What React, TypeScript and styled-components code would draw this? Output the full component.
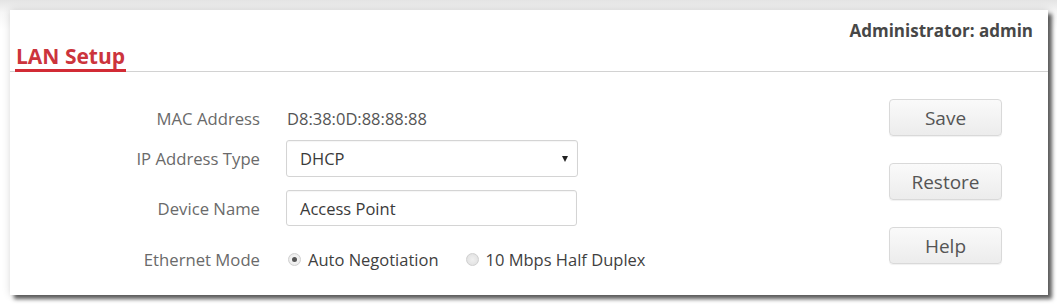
import styled, { createGlobalStyle } from "styled-components";

const GlobalStyle = createGlobalStyle`
    html, body {
        margin: 0;
        padding: 0;
        background: #ffffff;
    }
    body {
        font-family: "Open Sans", "Noto Sans", Arial, sans-serif;
        width: 1057px;
        height: 304px;
        overflow: hidden;
    }
`;

const Page = styled.div`
    padding: 10px 9px 9px 10px;
    background: linear-gradient(#e4e4e4, #f6f6f6 12px, #ffffff 30px);
`;

const Panel = styled.div`
    width: 1038px;
    height: 285px;
    background: #ffffff;
    box-shadow: 0 0 8px rgba(0, 0, 0, 0.14), 4px 4px 4px rgba(0, 0, 0, 0.62);
    display: flex;
    flex-direction: column;
`;

const Header = styled.div`
    height: 61px;
    border-bottom: 1px solid #d2d2d2;
    display: flex;
    justify-content: space-between;
    padding: 0 15px 0 5px;
`;

const Title = styled.h1`
    align-self: flex-end;
    margin: 0 0 -1px 0;
    font-size: 21px;
    font-weight: 700;
    color: #cc343c;
    line-height: 24px;
    padding: 0 1px 1px 1px;
    border-bottom: 3px solid #d22b35;
`;

const Admin = styled.div`
    margin-top: 9px;
    font-size: 17px;
    font-weight: 700;
    color: #474747;
`;

const Body = styled.div`
    flex: 1;
    display: flex;
    justify-content: space-between;
    padding: 0 46px 0 0;
`;

const Form = styled.div`
    display: grid;
    grid-template-columns: 250px auto;
    grid-template-rows: 18px 37px 36px 40px;
    column-gap: 26px;
    row-gap: 13px;
    padding-top: 37px;
    align-content: start;
`;

const Label = styled.div`
    display: flex;
    align-items: center;
    justify-content: flex-end;
    font-size: 16.7px;
    color: #6a6a6a;
    white-space: nowrap;
`;

const Field = styled.div`
    display: flex;
    align-items: center;
    font-size: 16.5px;
    color: #444;
    white-space: nowrap;
`;

const Value = styled.span`
    padding-left: 1px;
    color: #555;
`;

const Box = styled.div<{ $w: number }>`
    width: ${(p) => p.$w}px;
    height: 100%;
    box-sizing: border-box;
    border: 1px solid #d4d4d4;
    border-radius: 3px;
    box-shadow: inset 0 1px 1px rgba(0, 0, 0, 0.04);
    display: flex;
    align-items: center;
    justify-content: space-between;
    padding: 0 9px 0 13px;
    color: #3a3a3a;
`;

const Arrow = styled.span`
    width: 0;
    height: 0;
    border-left: 3.5px solid transparent;
    border-right: 3.5px solid transparent;
    border-top: 6px solid #222;
`;

const RadioGroup = styled.div`
    display: flex;
    align-items: center;
    padding-left: 2px;
`;

const RadioItem = styled.label`
    display: flex;
    align-items: center;
    gap: 7px;
    margin-right: 27px;
    color: #3f3f3f;
`;

const Radio = styled.span<{ $on?: boolean }>`
    width: 13px;
    height: 13px;
    box-sizing: border-box;
    border-radius: 50%;
    border: 1px solid #cfcfcf;
    background: ${(p) =>
        p.$on ? "radial-gradient(#fafafa, #e6e6e6)" : "radial-gradient(#f0f0f0, #dedede)"};
    display: flex;
    align-items: center;
    justify-content: center;
    &::after {
        content: "";
        width: 5px;
        height: 5px;
        border-radius: 50%;
        background: ${(p) => (p.$on ? "#555" : "transparent")};
    }
`;

const Buttons = styled.div`
    display: flex;
    flex-direction: column;
    gap: 27px;
    padding-top: 27px;
`;

const Button = styled.button`
    width: 113px;
    height: 37px;
    border: 1px solid #d9d9d9;
    border-radius: 4px;
    background: linear-gradient(#fafafa, #ececec);
    box-shadow: 0 1px 1px rgba(0, 0, 0, 0.06);
    font-family: "Open Sans", "Noto Sans", Arial, sans-serif;
    font-size: 19px;
    color: #555;
    padding: 0;
`;

export default function App() {
    return (
        <>
            <GlobalStyle />
            <Page>
                <Panel>
                    <Header>
                        <Title>LAN Setup</Title>
                        <Admin>Administrator: admin</Admin>
                    </Header>
                    <Body>
                        <Form>
                            <Label>MAC Address</Label>
                            <Field>
                                <Value>D8:38:0D:88:88:88</Value>
                            </Field>
                            <Label>IP Address Type</Label>
                            <Field>
                                <Box $w={292}>
                                    DHCP
                                    <Arrow />
                                </Box>
                            </Field>
                            <Label>Device Name</Label>
                            <Field>
                                <Box $w={291}>Access Point</Box>
                            </Field>
                            <Label>Ethernet Mode</Label>
                            <Field>
                                <RadioGroup>
                                    <RadioItem>
                                        <Radio $on />
                                        Auto Negotiation
                                    </RadioItem>
                                    <RadioItem>
                                        <Radio />
                                        10 Mbps Half Duplex
                                    </RadioItem>
                                </RadioGroup>
                            </Field>
                        </Form>
                        <Buttons>
                            <Button>Save</Button>
                            <Button>Restore</Button>
                            <Button>Help</Button>
                        </Buttons>
                    </Body>
                </Panel>
            </Page>
        </>
    );
}
